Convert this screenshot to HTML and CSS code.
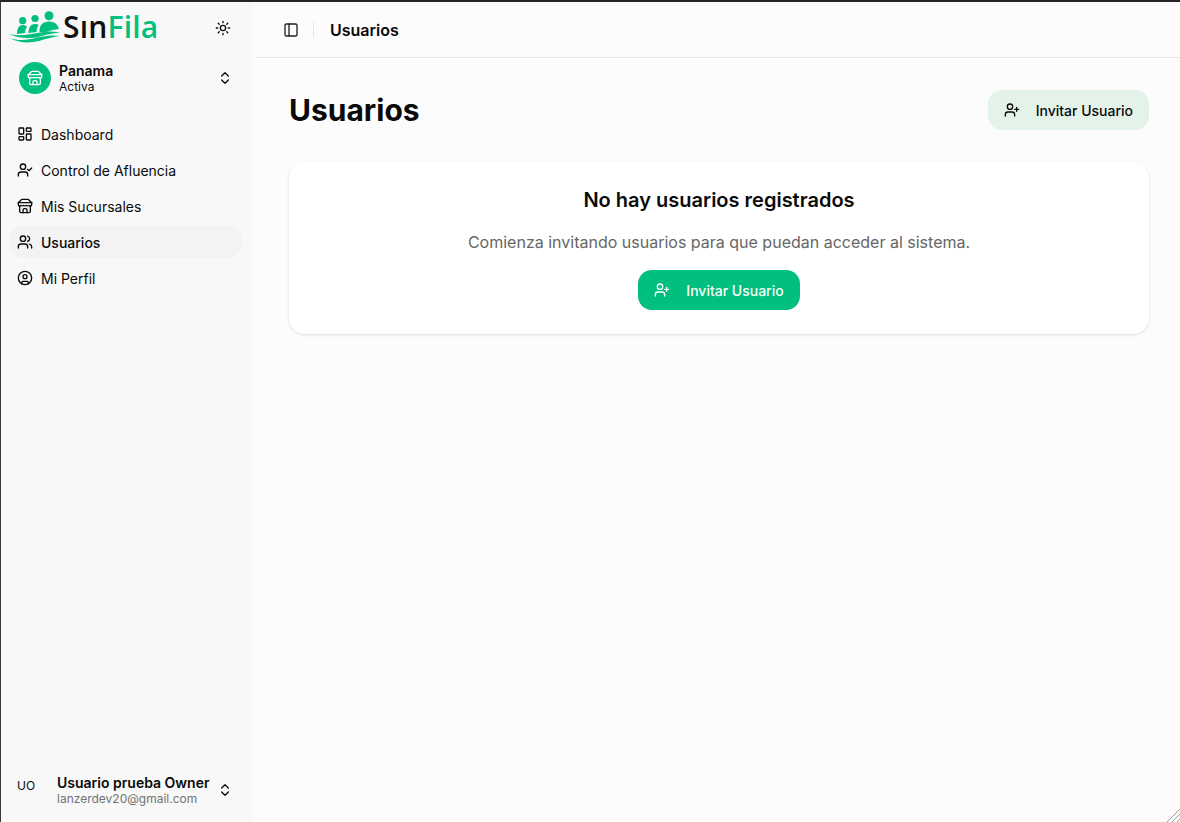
FILE: index.html
```html
<!DOCTYPE html>
<html lang="en">
<head>
    <meta charset="UTF-8">
    <meta name="viewport" content="width=device-width, initial-scale=1.0">
    <title>Usuarios - SinFila</title>
    <link rel="stylesheet" href="styles.css">
</head>
<body>

    <div class="app">
        <!-- Sidebar -->
        <aside class="sidebar">
            <div class="brand-row">
                <div class="brand">
                    <svg class="brand-mark" width="54" height="34" viewBox="0 0 54 34" fill="#00bf7f">
                        <circle cx="13.700" cy="10.700" r="3.600"/>
                        <circle cx="26" cy="8.500" r="3.600"/>
                        <circle cx="40" cy="5.800" r="4.500"/>
                        <path d="M8 24c0-5 1.500-9 5.800-9 1.800 0 3.200.6 4.200 1.800-1.400 2-2 4.200-2 6.200z"/>
                        <path d="M19.500 23c0-5 1.800-9 6.500-9 1.600 0 2.700.4 3.600 1-1.300 2-2 4.300-2 7z"/>
                        <path d="M30.500 22c0-7 3-10.500 9.500-10.500 5.500 0 9 3 10 7.500-5 .6-9 1.500-14 3.500z"/>
                        <path d="M0 24c8 2 16 1.500 24-.2 9-2 18-3.500 27-1-7 .2-13 1.800-20 3.600C21 29 9 28.500 0 24z"/>
                        <path d="M1 28c9 3.500 18 2 26-.2 8-2 15-3.200 24-1.800-7 .6-13 2.800-21 5-10 2.400-21 2-29-3z"/>
                    </svg>
                    <span class="brand-name">Sın<span class="brand-accent">Fila</span></span>
                </div>
                <svg class="icon theme-icon" viewBox="0 0 24 24">
                    <circle cx="12" cy="12" r="4"/>
                    <path d="M12 2v2M12 20v2M4.900 4.900l1.400 1.400M17.700 17.700l1.400 1.400M2 12h2M20 12h2M6.300 17.700l-1.400 1.400M19.100 4.900l-1.400 1.400"/>
                </svg>
            </div>

            <div class="branch">
                <div class="branch-badge">
                    <svg class="icon" viewBox="0 0 24 24">
                        <path d="m2 7 4.400-4.400A2 2 0 0 1 7.800 2h8.400a2 2 0 0 1 1.400.6L22 7"/>
                        <path d="M4 12v8a2 2 0 0 0 2 2h12a2 2 0 0 0 2-2v-8"/>
                        <path d="M15 22v-4a2 2 0 0 0-2-2h-2a2 2 0 0 0-2 2v4"/>
                        <path d="M2 7h20"/>
                        <path d="M22 7v3a2 2 0 0 1-2 2 2.700 2.700 0 0 1-2-1 2.700 2.700 0 0 1-4 0 2.700 2.700 0 0 1-4 0 2.700 2.700 0 0 1-4 0 2.700 2.700 0 0 1-2 1 2 2 0 0 1-2-2V7"/>
                    </svg>
                </div>
                <div class="branch-text">
                    <div class="branch-name">Panama</div>
                    <div class="branch-status">Activa</div>
                </div>
                <svg class="icon updown" viewBox="0 0 24 24"><path d="m7 15 5 5 5-5M7 9l5-5 5 5"/></svg>
            </div>

            <nav class="nav">
                <a class="nav-item" href="#">
                    <svg class="icon" viewBox="0 0 24 24">
                        <rect x="3" y="3" width="7" height="9" rx="1"/>
                        <rect x="14" y="3" width="7" height="5" rx="1"/>
                        <rect x="14" y="12" width="7" height="9" rx="1"/>
                        <rect x="3" y="16" width="7" height="5" rx="1"/>
                    </svg>
                    Dashboard
                </a>
                <a class="nav-item" href="#">
                    <svg class="icon" viewBox="0 0 24 24">
                        <path d="M16 21v-2a4 4 0 0 0-4-4H6a4 4 0 0 0-4 4v2"/>
                        <circle cx="9" cy="7" r="4"/>
                        <path d="m16 11 2 2 4-4"/>
                    </svg>
                    Control de Afluencia
                </a>
                <a class="nav-item" href="#">
                    <svg class="icon" viewBox="0 0 24 24">
                        <path d="m2 7 4.400-4.400A2 2 0 0 1 7.800 2h8.400a2 2 0 0 1 1.400.6L22 7"/>
                        <path d="M4 12v8a2 2 0 0 0 2 2h12a2 2 0 0 0 2-2v-8"/>
                        <path d="M15 22v-4a2 2 0 0 0-2-2h-2a2 2 0 0 0-2 2v4"/>
                        <path d="M2 7h20"/>
                        <path d="M22 7v3a2 2 0 0 1-2 2 2.700 2.700 0 0 1-2-1 2.700 2.700 0 0 1-4 0 2.700 2.700 0 0 1-4 0 2.700 2.700 0 0 1-4 0 2.700 2.700 0 0 1-2 1 2 2 0 0 1-2-2V7"/>
                    </svg>
                    Mis Sucursales
                </a>
                <a class="nav-item active" href="#">
                    <svg class="icon" viewBox="0 0 24 24">
                        <path d="M16 21v-2a4 4 0 0 0-4-4H6a4 4 0 0 0-4 4v2"/>
                        <circle cx="9" cy="7" r="4"/>
                        <path d="M22 21v-2a4 4 0 0 0-3-3.870"/>
                        <path d="M16 3.130a4 4 0 0 1 0 7.750"/>
                    </svg>
                    Usuarios
                </a>
                <a class="nav-item" href="#">
                    <svg class="icon" viewBox="0 0 24 24">
                        <circle cx="12" cy="12" r="10"/>
                        <circle cx="12" cy="10" r="3"/>
                        <path d="M7 20.700V19a2 2 0 0 1 2-2h6a2 2 0 0 1 2 2v1.700"/>
                    </svg>
                    Mi Perfil
                </a>
            </nav>

            <div class="account">
                <div class="account-initials">UO</div>
                <div class="account-text">
                    <div class="account-name">Usuario prueba Owner</div>
                    <div class="account-email">lanzerdev20@gmail.com</div>
                </div>
                <svg class="icon updown" viewBox="0 0 24 24"><path d="m7 15 5 5 5-5M7 9l5-5 5 5"/></svg>
            </div>
        </aside>

        <!-- Main area -->
        <div class="main">
            <header class="topbar">
                <svg class="icon panel-icon" viewBox="0 0 24 24">
                    <rect x="3" y="3" width="18" height="18" rx="2"/>
                    <path d="M9 3v18"/>
                </svg>
                <span class="topbar-sep"></span>
                <span class="topbar-title">Usuarios</span>
            </header>

            <main class="content">
                <div class="page-head">
                    <h1>Usuarios</h1>
                    <button class="btn btn-soft">
                        <svg class="icon" viewBox="0 0 24 24">
                            <path d="M16 21v-2a4 4 0 0 0-4-4H6a4 4 0 0 0-4 4v2"/>
                            <circle cx="9" cy="7" r="4"/>
                            <path d="M19 8v6M22 11h-6"/>
                        </svg>
                        Invitar Usuario
                    </button>
                </div>

                <section class="empty-card">
                    <h2>No hay usuarios registrados</h2>
                    <p>Comienza invitando usuarios para que puedan acceder al sistema.</p>
                    <button class="btn btn-primary">
                        <svg class="icon" viewBox="0 0 24 24">
                            <path d="M16 21v-2a4 4 0 0 0-4-4H6a4 4 0 0 0-4 4v2"/>
                            <circle cx="9" cy="7" r="4"/>
                            <path d="M19 8v6M22 11h-6"/>
                        </svg>
                        Invitar Usuario
                    </button>
                </section>
            </main>
        </div>
    </div>

    <!-- Window resize grip -->
    <svg class="grip" width="14" height="14" viewBox="0 0 14 14">
        <path d="M1 14 14 1M6 14l8-8M11 14l3-3"/>
    </svg>

</body>
</html>
```

FILE: styles.css
```css
* {
    box-sizing: border-box;
}

body {
    margin: 0;
    height: 822px;
    overflow: hidden;
    font-family: Inter, "Liberation Sans", sans-serif;
    font-size: 14px;
    color: #0a0a0a;
    background-color: #fcfcfc;
}

.app {
    display: flex;
    height: 100%;
    border-top: 2px solid #26262a;
    border-left: 1px solid #3a3a3e;
}

.icon {
    width: 16px;
    height: 16px;
    flex-shrink: 0;
    fill: none;
    stroke: currentColor;
    stroke-width: 2;
    stroke-linecap: round;
    stroke-linejoin: round;
}

/* Sidebar */
.sidebar {
    width: 249px;
    flex-shrink: 0;
    display: flex;
    flex-direction: column;
    background-color: #f8f8f8;
    box-shadow: 1px 0 2px rgba(0, 0, 0, 0.04);
}

.brand-row {
    display: flex;
    align-items: center;
    justify-content: space-between;
    height: 50px;
    padding: 0 19px 0 8px;
}

.brand {
    display: flex;
    align-items: center;
}

.brand-name {
    font-family: "Open Sans", sans-serif;
    font-size: 30px;
    font-weight: 600;
    line-height: 34px;
    letter-spacing: 0.2px;
    color: #111;
}

.brand-accent {
    color: #00bf7f;
}

.theme-icon {
    margin-top: 2px;
}

.branch {
    display: flex;
    align-items: center;
    height: 36px;
    margin-top: 8px;
    padding: 0 17px 0 18px;
}

.branch-badge {
    display: flex;
    align-items: center;
    justify-content: center;
    width: 32px;
    height: 32px;
    border-radius: 50%;
    background-color: #00bf7f;
    color: #fff;
}

.branch-text {
    flex: 1;
    margin-left: 8px;
}

.branch-name {
    font-size: 14px;
    font-weight: 600;
    line-height: 18px;
}

.branch-status {
    font-size: 12px;
    line-height: 14px;
}

.nav {
    display: flex;
    flex-direction: column;
    gap: 4px;
    margin-top: 22px;
    padding: 0 8px;
}

.nav-item {
    display: flex;
    align-items: center;
    gap: 8px;
    height: 32px;
    padding: 0 8px;
    border-radius: 14px;
    color: #0a0a0a;
    text-decoration: none;
}

.nav-item.active {
    background-color: #f3f3f3;
    font-weight: 500;
}

.account {
    display: flex;
    align-items: center;
    margin-top: auto;
    height: 36px;
    margin-bottom: 14px;
    padding: 0 17px 0 16px;
}

.account-initials {
    width: 40px;
    margin-bottom: 10px;
    font-size: 12px;
}

.account-text {
    flex: 1;
}

.account-name {
    font-size: 14px;
    font-weight: 600;
    line-height: 18px;
    white-space: nowrap;
}

.account-email {
    font-size: 12px;
    line-height: 14px;
    color: #737373;
}

/* Main area */
.main {
    flex: 1;
    min-width: 0;
    display: flex;
    flex-direction: column;
}

.topbar {
    display: flex;
    align-items: center;
    height: 56px;
    margin-left: 7px;
    padding-left: 26px;
    border-bottom: 1px solid #e5e5e5;
}

.panel-icon {
    color: #222;
}

.topbar-sep {
    width: 1px;
    height: 16px;
    margin: 0 16px 0 14px;
    background-color: #e5e5e5;
}

.topbar-title {
    font-size: 16px;
    font-weight: 600;
}

.content {
    padding: 32px 31px 0 39px;
}

.page-head {
    display: flex;
    align-items: center;
    justify-content: space-between;
    height: 40px;
    margin-bottom: 32px;
}

h1 {
    margin: 0;
    font-size: 30px;
    font-weight: 700;
    line-height: 36px;
}

.btn {
    display: inline-flex;
    align-items: center;
    gap: 16px;
    height: 40px;
    padding: 0 16px;
    border: 0;
    border-radius: 14px;
    font-family: inherit;
    font-size: 14px;
    font-weight: 500;
    cursor: pointer;
}

.btn-soft {
    background-color: #e3f3ea;
    color: #0a0a0a;
}

.btn-primary {
    background-color: #00bf7f;
    color: #f6fff9;
}

.empty-card {
    display: flex;
    flex-direction: column;
    align-items: center;
    height: 172px;
    padding-top: 24px;
    border-radius: 16px;
    background-color: #fff;
    box-shadow: 0 1px 3px rgba(0, 0, 0, 0.12);
}

h2 {
    margin: 0;
    font-size: 20px;
    font-weight: 600;
    line-height: 28px;
}

.empty-card p {
    margin: 16px 0 16px;
    font-size: 16px;
    line-height: 24px;
    color: #666;
}

.grip {
    position: fixed;
    right: 0;
    bottom: 0;
    fill: none;
    stroke: #9a9a9a;
    stroke-width: 1;
}
```
